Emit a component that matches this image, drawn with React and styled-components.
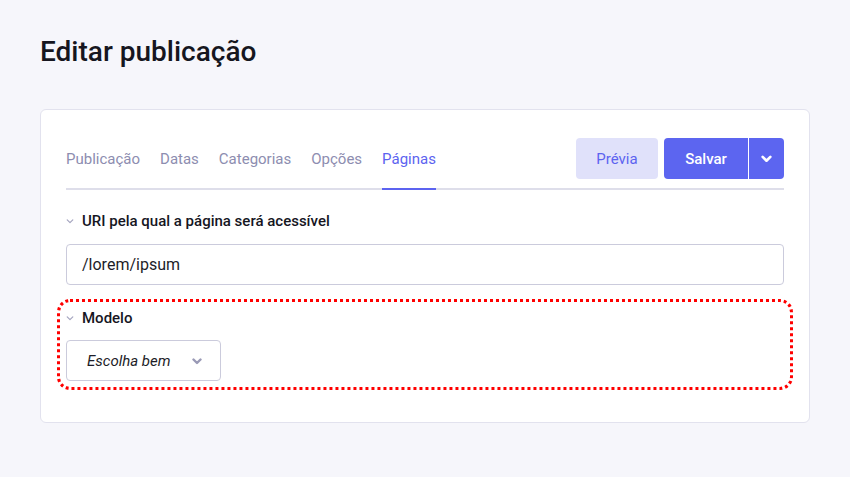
import React from 'react';
import styled, { createGlobalStyle } from 'styled-components';

const GlobalStyle = createGlobalStyle`
    body {
        margin: 0;
        background: #f6f6fb;
        font-family: Roboto, "Liberation Sans", sans-serif;
        color: #16161f;
    }
`;

const Page = styled.div`
    padding: 36px 40px 40px;
`;

const Title = styled.h1`
    margin: 0 0 41px;
    font-size: 28px;
    line-height: 32px;
    font-weight: 500;
    color: #16161f;
`;

const Card = styled.div`
    background: #fff;
    border: 1px solid #e2e2ee;
    border-radius: 6px;
    padding: 28px 25px 41px;
`;

const Header = styled.div`
    display: flex;
    align-items: stretch;
    border-bottom: 2px solid #dedeea;
`;

const Tabs = styled.nav`
    display: flex;
    gap: 20px;
    flex: 1;
`;

const Tab = styled.div`
    display: flex;
    align-items: center;
    padding-bottom: 9px;
    margin-bottom: -2px;
    border-bottom: 2px solid ${props => (props.active ? '#5c63f0' : 'transparent')};
    font-size: 15px;
    color: ${props => (props.active ? '#5c63f0' : '#8d8db0')};
`;

const Actions = styled.div`
    display: flex;
    gap: 6px;
    padding-bottom: 9px;
`;

const Button = styled.button`
    height: 41px;
    border: 0;
    border-radius: 4px;
    font-family: inherit;
    font-size: 15px;
    padding: 0;
    width: ${props => props.width}px;
    background: ${props => (props.primary ? '#5c65f0' : '#e0e1fa')};
    color: ${props => (props.primary ? '#fff' : '#5c63f0')};
    font-weight: ${props => (props.primary ? 500 : 400)};
`;

const SplitGroup = styled.div`
    display: flex;
    gap: 1px;

    ${Button}:first-child {
        border-radius: 4px 0 0 4px;
    }

    ${Button}:last-child {
        border-radius: 0 4px 4px 0;
        display: flex;
        align-items: center;
        justify-content: center;
    }
`;

const Section = styled.section`
    margin-top: ${props => props.top}px;
    border-radius: 4px;
    ${props => props.highlighted && `
        outline: 3px dotted #ff0000;
        outline-offset: 6px;
    `}
`;

const Label = styled.div`
    display: flex;
    align-items: center;
    gap: 8px;
    font-size: 15px;
    line-height: 20px;
    font-weight: 500;
    color: #16161f;
    margin-bottom: ${props => props.gap}px;
`;

const TextInput = styled.div`
    height: 41px;
    box-sizing: border-box;
    border: 1px solid #cbcbdc;
    border-radius: 4px;
    padding: 0 15px;
    display: flex;
    align-items: center;
    font-size: 16px;
    color: #1d1d28;
`;

const Select = styled.div`
    width: 155px;
    height: 41px;
    box-sizing: border-box;
    border: 1px solid #cbcbdc;
    border-radius: 4px;
    padding: 0 18px 0 20px;
    display: flex;
    align-items: center;
    justify-content: space-between;
    font-size: 15px;
    font-style: italic;
    color: #1d1d28;
`;

const Chevron = ({ size = 8, color = '#a4a4bf', stroke = 1.5 }) => (
    <svg width={size} height={size} viewBox="0 0 10 10" fill="none">
        <path d="M1.5 3.5 L5 7 L8.5 3.5" stroke={color} strokeWidth={stroke} strokeLinecap="round" strokeLinejoin="round" />
    </svg>
);

const tabs = ['Publicação', 'Datas', 'Categorias', 'Opções', 'Páginas'];

export default function App() {
    return (
        <Page>
            <GlobalStyle />
            <Title>Editar publicação</Title>
            <Card>
                <Header>
                    <Tabs>
                        {tabs.map(t => (
                            <Tab key={t} active={t === 'Páginas'}>{t}</Tab>
                        ))}
                    </Tabs>
                    <Actions>
                        <Button width={82}>Prévia</Button>
                        <SplitGroup>
                            <Button primary width={84}>Salvar</Button>
                            <Button primary width={35}>
                                <Chevron size={11} color="#fff" stroke={2.4} />
                            </Button>
                        </SplitGroup>
                    </Actions>
                </Header>
                <Section top={21}>
                    <Label gap={13}>
                        <Chevron />
                        URI pela qual a página será acessível
                    </Label>
                    <TextInput>/lorem/ipsum</TextInput>
                </Section>
                <Section top={23} highlighted>
                    <Label gap={12}>
                        <Chevron />
                        Modelo
                    </Label>
                    <Select>
                        Escolha bem
                        <Chevron size={10} color="#9a9ab6" stroke={2.4} />
                    </Select>
                </Section>
            </Card>
        </Page>
    );
}
